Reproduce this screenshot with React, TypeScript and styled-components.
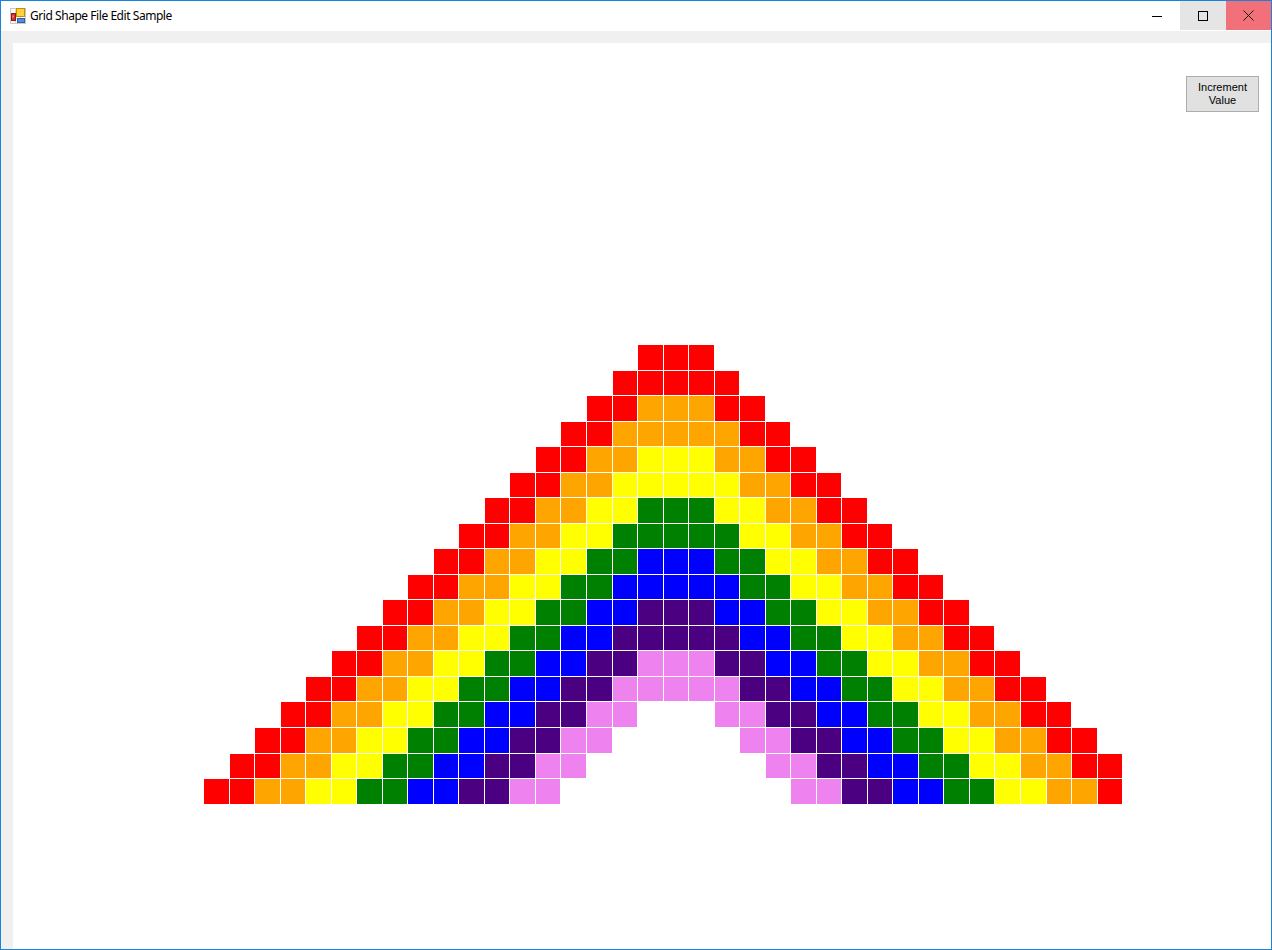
import React from "react";
import styled, { createGlobalStyle } from "styled-components";

const GlobalStyle = createGlobalStyle`
  html, body { margin: 0; padding: 0; background: #ffffff; }
  body { width: 1272px; height: 950px; overflow: hidden; }
  * { box-sizing: border-box; }
`;

const Window = styled.div`
  width: 1272px;
  height: 950px;
  border: 1px solid #1883d7;
  display: flex;
  flex-direction: column;
  background: #f0f0f0;
`;

const TitleBar = styled.div`
  height: 30px;
  flex: none;
  background: #ffffff;
  display: flex;
  align-items: flex-start;
`;

const TitleLeft = styled.div`
  flex: 1;
  display: flex;
  align-items: center;
  height: 30px;
  padding-left: 9px;
  gap: 4px;
`;

const TitleText = styled.span`
  font-family: "Noto Sans", "Liberation Sans", sans-serif;
  font-size: 12px;
  color: #000000;
  letter-spacing: -0.45px;
  line-height: 16px;
  margin-top: -1px;
`;

const CaptionButton = styled.div<{ $w: number; $bg: string }>`
  width: ${(p) => p.$w}px;
  height: 29px;
  background: ${(p) => p.$bg};
  display: flex;
  align-items: center;
  justify-content: center;
  flex: none;
`;

const GrayStrip = styled.div`
  height: 12px;
  flex: none;
  background: #f0f0f0;
`;

const Body = styled.div`
  flex: 1;
  display: flex;
  background: #f0f0f0;
  padding-left: 12px;
`;

const Panel = styled.div`
  flex: 1;
  background: #ffffff;
  display: flex;
  flex-direction: column;
`;

const ButtonRow = styled.div`
  display: flex;
  justify-content: flex-end;
  padding: 33px 12px 0 0;
`;

const PushButton = styled.button`
  width: 73px;
  height: 36px;
  background: #e1e1e1;
  border: 1px solid #adadad;
  padding: 0;
  font-family: "Liberation Sans", Arial, sans-serif;
  font-size: 11px;
  line-height: 13px;
  color: #000000;
  text-align: center;
  cursor: default;
`;

const Grid = styled.div`
  margin: 233px 0 0 191px;
  display: grid;
  grid-template-columns: repeat(36, 24.54px);
  grid-template-rows: repeat(18, 24.54px);
  gap: 1px;
  width: max-content;
`;

const Cell = styled.div<{ $color: string }>`
  background: ${(p) => p.$color};
`;

const BANDS = ["#ff0000", "#ffa500", "#ffff00", "#008000", "#0000ff", "#4b0082", "#ee82ee"];

const ROWS = 18;
const COLS = 36;

function cellColor(r: number, c: number): string {
  const left = 17 - r;
  const right = 19 + r;
  if (c < left || c > right) return "transparent";
  const d = Math.min(c - left, right - c, r);
  const band = Math.floor(d / 2);
  return band < BANDS.length ? BANDS[band] : "transparent";
}

const AppIcon = () => (
  <svg width="16" height="16" viewBox="0 0 16 16">
    <rect x="0.5" y="0.5" width="15" height="15" fill="#ffffff" stroke="#c8c8c8" />
    <path d="M0.5 5.5H15.5M0.5 10.5H15.5M5.5 0.5V15.5M10.5 0.5V15.5" stroke="#d6d6d6" fill="none" />
    <rect x="6.5" y="0.5" width="8" height="8" fill="#ffd43a" stroke="#d08a00" />
    <rect x="1.5" y="5.5" width="4" height="7" fill="#d9302b" stroke="#8e1b17" />
    <rect x="2.5" y="7.5" width="1" height="2" fill="#f5c0b0" />
    <rect x="7.5" y="10.5" width="7" height="4" fill="#4f8fe0" stroke="#2a5ea8" />
  </svg>
);

const MinIcon = () => (
  <svg width="10" height="10" viewBox="0 0 10 10">
    <path d="M0 5.5H10" stroke="#000" strokeWidth="1" />
  </svg>
);

const MaxIcon = () => (
  <svg width="10" height="10" viewBox="0 0 10 10">
    <rect x="0.5" y="0.5" width="9" height="9" fill="none" stroke="#000" strokeWidth="1" />
  </svg>
);

const CloseIcon = () => (
  <svg width="11" height="11" viewBox="0 0 11 11">
    <path d="M0.5 0.5L10.5 10.5M10.5 0.5L0.5 10.5" stroke="#111" strokeWidth="1" />
  </svg>
);

export default function App() {
  const cells: React.ReactNode[] = [];
  for (let r = 0; r < ROWS; r++) {
    for (let c = 0; c < COLS; c++) {
      cells.push(<Cell key={`${r}-${c}`} $color={cellColor(r, c)} />);
    }
  }
  return (
    <>
      <GlobalStyle />
      <Window>
        <TitleBar>
          <TitleLeft>
            <AppIcon />
            <TitleText>Grid Shape File Edit Sample</TitleText>
          </TitleLeft>
          <CaptionButton $w={46} $bg="#ffffff">
            <MinIcon />
          </CaptionButton>
          <CaptionButton $w={46} $bg="#e5e5e5">
            <MaxIcon />
          </CaptionButton>
          <CaptionButton $w={45} $bg="#f1707a">
            <CloseIcon />
          </CaptionButton>
        </TitleBar>
        <GrayStrip />
        <Body>
          <Panel>
            <ButtonRow>
              <PushButton>
                Increment
                <br />
                Value
              </PushButton>
            </ButtonRow>
            <Grid>{cells}</Grid>
          </Panel>
        </Body>
      </Window>
    </>
  );
}
